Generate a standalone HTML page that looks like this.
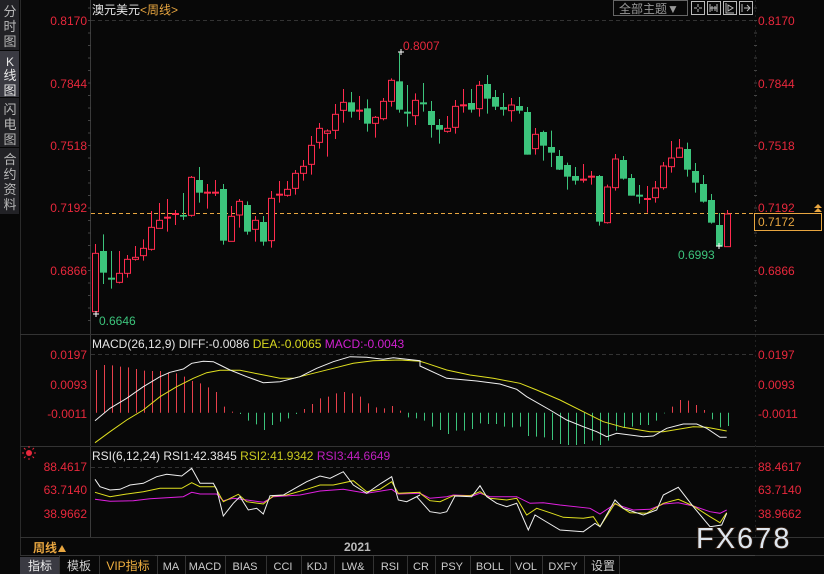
<!DOCTYPE html>
<html><head><meta charset="utf-8"><style>
html,body{margin:0;padding:0;background:#080808;width:824px;height:574px;overflow:hidden;font-family:"Liberation Sans","Noto Sans CJK SC",sans-serif}
svg{position:absolute;left:0;top:0}
</style></head><body>
<svg id="s" width="824" height="574" xmlns="http://www.w3.org/2000/svg" font-family="Liberation Sans, Noto Sans CJK SC, sans-serif">
<rect width="824" height="574" fill="#080808"/>
<!-- sidebar -->
<rect x="0" y="0" width="19" height="50" fill="#222226"/>
<rect x="0" y="51" width="19" height="46" fill="#3a3a42"/>
<rect x="0" y="98" width="19" height="49" fill="#222226"/>
<rect x="0" y="148" width="19" height="66" fill="#222226"/>
<g fill="#b8b8b8" font-size="13" text-anchor="middle">
<text x="10" y="16">分</text><text x="10" y="31">时</text><text x="10" y="46">图</text>
<text x="10" y="66" fill="#e8e8e8" font-size="12">K</text><text x="10" y="80" fill="#e8e8e8">线</text><text x="10" y="95" fill="#e8e8e8">图</text>
<text x="10" y="114">闪</text><text x="10" y="129">电</text><text x="10" y="144">图</text>
<text x="10" y="164">合</text><text x="10" y="179">约</text><text x="10" y="194">资</text><text x="10" y="209">料</text>
</g>
<!-- frame lines -->
<line x1="20.5" y1="0" x2="20.5" y2="556" stroke="#2a2a2a"/>
<line x1="90.5" y1="0" x2="90.5" y2="537" stroke="#3a3a3a"/>
<line x1="20" y1="334.5" x2="824" y2="334.5" stroke="#333"/>
<line x1="20" y1="446.5" x2="824" y2="446.5" stroke="#333"/>
<line x1="20" y1="537.5" x2="824" y2="537.5" stroke="#333"/>
<line x1="20" y1="555.5" x2="824" y2="555.5" stroke="#333"/>
<line x1="755.5" y1="0" x2="755.5" y2="537" stroke="#222" stroke-dasharray="2,3"/>
<!-- gridlines -->
<line x1="91" y1="20.5" x2="755" y2="20.5" stroke="#333" stroke-dasharray="4,3"/>
<line x1="91" y1="354.5" x2="755" y2="354.5" stroke="#333" stroke-dasharray="4,3"/>
<line x1="91" y1="467.5" x2="755" y2="467.5" stroke="#333" stroke-dasharray="4,3"/>
<g id="ticks"></g>
<!-- titles -->
<text x="92" y="14" font-size="12" fill="#e6e6e6">澳元美元<tspan fill="#e8a640">&lt;周线&gt;</tspan></text>
<rect x="613.5" y="0.5" width="74" height="15" fill="none" stroke="#666"/>
<text x="619" y="13" font-size="12" fill="#999">全部主题▼</text>
<g fill="none" stroke="#bbb" stroke-width="1">
<rect x="691.5" y="1.5" width="13" height="13"/><path d="M698 4v3M698 9v3M694 8h3M699 8h3"/>
<rect x="707.5" y="1.5" width="13" height="13"/><path d="M710 4v8M717 4v8M710 8h7M712 6v5M715 6v5"/>
<rect x="723.5" y="1.5" width="13" height="13"/><path d="M726 3v10h8M728 5l5 3-5 3z"/>
<rect x="739.5" y="1.5" width="13" height="13"/><path d="M742 4v8M744 8h6M747 5l3 3-3 3"/>
</g>
<!-- price axis labels -->
<g font-size="12" fill="#e8283c">
<g text-anchor="end"><text x="87" y="25">0.8170</text><text x="87" y="88">0.7844</text><text x="87" y="150">0.7518</text><text x="87" y="212">0.7192</text><text x="87" y="275">0.6866</text>
<text x="87" y="359">0.0197</text><text x="87" y="389">0.0093</text><text x="87" y="418">-0.0011</text>
<text x="87" y="471">88.4617</text><text x="87" y="494">63.7140</text><text x="87" y="518">38.9662</text></g>
<text x="758" y="25">0.8170</text><text x="758" y="88">0.7844</text><text x="758" y="150">0.7518</text><text x="758" y="212">0.7192</text><text x="758" y="275">0.6866</text>
<text x="758" y="359">0.0197</text><text x="758" y="389">0.0093</text><text x="758" y="418">-0.0011</text>
<text x="758" y="471">88.4617</text><text x="758" y="494">63.7140</text><text x="758" y="518">38.9662</text>
</g>
<line x1="91" y1="213.5" x2="822" y2="213.5" stroke="#e8a640" stroke-dasharray="4,3"/>
<rect x="754.5" y="213.5" width="67" height="17" fill="#080808" stroke="#e8a640"/>
<text x="758" y="226" font-size="12" fill="#e8a640">0.7172</text>
<path d="M814 208l4-4 4 4zM814 212l4-4 4 4z" fill="#e8a640"/>
<g id="candles"></g>
<text x="403" y="50" font-size="12" fill="#e8283c">0.8007</text>
<text x="99" y="325" font-size="12" fill="#3cc47c">0.6646</text>
<text x="678" y="259" font-size="12" fill="#3cc47c">0.6993</text>
<!-- MACD -->
<text x="92" y="348" font-size="12" fill="#e6e6e6">MACD(26,12,9) DIFF:-0.0086 <tspan fill="#d8d820">DEA:-0.0065</tspan> <tspan fill="#d020d0">MACD:-0.0043</tspan></text>
<g id="macd"></g>
<!-- RSI -->
<circle cx="29" cy="453" r="3" fill="#e8283c"/>
<g stroke="#e8283c" stroke-width="1"><path d="M29 446v2M29 458v2M22 453h2M34 453h2M24 448l1.5 1.5M34 448l-1.5 1.5M24 458l1.5-1.5M34 458l-1.5-1.5"/></g>
<text x="92" y="460" font-size="12" fill="#e6e6e6">RSI(6,12,24) RSI1:42.3845 <tspan fill="#c8c820">RSI2:41.9342</tspan> <tspan fill="#c020c0">RSI3:44.6649</tspan></text>
<g id="rsi"></g>
<!-- time axis -->
<text x="33" y="552" font-size="12" fill="#e8a640" font-weight="bold">周线</text>
<path d="M58 552l4-7 4 7z" fill="#e8a640"/>
<text x="344" y="551" font-size="12" fill="#bbb" font-weight="bold">2021</text>
<line x1="155" y1="555.5" x2="755" y2="555.5" stroke="#444"/>
<!-- FX678 -->
<text x="696" y="548" font-size="29" fill="#dfe6ee" letter-spacing="2" style="paint-order:stroke" stroke="#2a1a10" stroke-width="2">FX678</text>
<!-- toolbar -->
<rect x="20" y="556" width="804" height="18" fill="#080808"/>
<rect x="20" y="557" width="39" height="17" fill="#3a3a42"/>
<g stroke="#333"><path d="M59.5 556v18M99.5 556v18M157.5 556v18M185.5 556v18M225.5 556v18M266.5 556v18M301.5 556v18M334.5 556v18M373.5 556v18M407.5 556v18M435.5 556v18M470.5 556v18M510.5 556v18M542.5 556v18M584.5 556v18M619.5 556v18"/></g>
<g font-size="12" fill="#ccc" text-anchor="middle">
<text x="40" y="570" fill="#eee">指标</text><text x="79" y="570">模板</text><text x="128" y="570" fill="#f0b040">VIP指标</text>
<text x="171" y="570" font-size="11">MA</text><text x="205" y="570" font-size="11">MACD</text><text x="245" y="570" font-size="11">BIAS</text>
<text x="283" y="570" font-size="11">CCI</text><text x="317" y="570" font-size="11">KDJ</text><text x="353" y="570" font-size="11">LW&amp;</text>
<text x="390" y="570" font-size="11">RSI</text><text x="421" y="570" font-size="11">CR</text><text x="452" y="570" font-size="11">PSY</text>
<text x="490" y="570" font-size="11">BOLL</text><text x="526" y="570" font-size="11">VOL</text><text x="563" y="570" font-size="11">DXFY</text>
<text x="603" y="570">设置</text>
</g>
</svg>
<script>
var NS="http://www.w3.org/2000/svg";
function el(p,t,a){var e=document.createElementNS(NS,t);for(var k in a)e.setAttribute(k,a[k]);p.appendChild(e);return e;}
var tk=document.getElementById('ticks');
for(var y=8;y<330;y+=12.5){el(tk,'line',{x1:88,y1:y,x2:91,y2:y,stroke:'#444'});el(tk,'line',{x1:754,y1:y,x2:757,y2:y,stroke:'#444'});}
var C=[['R',640,815,612,815],['G',633,698,583,732],['G',716,716,633,746],['R',700,727,633,730],['R',658,700,645,713],['R',652,658,618,662],['R',625,647,598,662],['R',562,628,513,632],['R',541,565,489,565],['R',533,533,477,575],['R',522,522,510,555],['G',525,530,459,540],['R',412,526,408,530],['G',420,458,381,488],['R',458,458,432,506],['R',458,458,420,468],['G',447,602,432,614],['R',529,604,498,604],['R',484,525,477,563],['G',495,575,484,584],['R',541,568,528,605],['G',546,605,528,617],['R',475,602,453,623],['R',464,464,423,488],['R',448,466,423,470],['R',400,445,390,464],['R',379,400,360,422],['R',316,373,288,404],['R',265,307,249,326],['R',273,280,268,350],['R',223,271,192,297],['R',187,211,147,248],['G',187,215,156,233],['R',212,212,168,240],['G',205,251,178,275],['R',232,250,228,293],['R',184,236,174,241],['R',121,184,115,200],['G',124,209,38,218],['G',218,218,135,260],['R',181,227,160,255],
['G',190,190,129,215],['G',213,255,183,293],['G',255,269,237,311],['R',265,274,228,278],['R',199,262,180,281],['R',196,196,147,218],['G',189,209,147,218],['R',136,206,123,230],['G',132,176,105,221],['G',171,200,150,210],['G',201,209,159,227],['R',195,212,174,245],['G',198,212,171,221],['G',216,344,201,344],['R',283,326,264,344],['G',276,317,272,362],['G',321,338,272,381],['G',348,389,330,390],['G',375,410,368,449],['G',408,422,381,434],['R',419,419,372,428],['R',410,410,393,434],['G',408,545,405,557],['R',441,548,434,551],['R',357,443,342,452],['G',360,416,348,419],['G',414,467,402,467],['G',467,467,435,491],['R',477,477,438,518],['R',444,473,423,488],['R',378,443,366,449],['R',354,380,303,398],['R',324,352,297,352],['G',327,389,308,410],['G',393,428,369,458],['G',432,485,405,488],['G',480,548,462,551],['G',555,620,519,620],['R',522,620,510,620]];
var g=document.getElementById('candles');
C.forEach(function(c,i){var x=Math.round(95.3+8*i)+0.5;var col=c[0]=='R'?'#ff2b4e':'#3cc47c';
var bt=40+c[1]/3,bb=40+c[2]/3,wt=40+c[3]/3,wb=40+c[4]/3;
el(g,'line',{x1:x,y1:wt,x2:x,y2:wb,stroke:col});
if(c[1]==c[2]){el(g,'rect',{x:x-3.5,y:bt-1,width:7,height:2,fill:col});}
else if(c[0]=='R'){el(g,'rect',{x:x-3,y:bt,width:6,height:bb-bt,fill:'#080808',stroke:col});}
else{el(g,'rect',{x:x-3.5,y:bt,width:7,height:bb-bt,fill:col});}
});
// extreme markers
el(g,'path',{d:'M398 52h6M401 49v6M93 314h6M96 311v6M716 246h6M719 243v6',stroke:'#fff'});
// MACD histogram
var mg=document.getElementById('macd');
var H=[120,105,106,110,112,117,122,123,123,127,130,140,153,160,172,186,230,245,252,272,283,300,285,275,265,252,237,222,205,200,190,186,190,200,220,232,235,228,242,262,265,272,290,300,312,302,302,297,280,282,282,290,292,290,318,320,322,330,342,345,345,342,332,345,332,302,292,290,285,285,272,250,230,210,212,225,240,268,292,288];
H.forEach(function(h,i){var x=Math.round(95.7+8*i)+0.5;var y=330+h/3;var z=412.7;
el(mg,'line',{x1:x,y1:z,x2:x,y2:y,stroke:h<248?'#e8404c':'#3cc47c'});});
function pl(p,a6,a7,col){var pts=[];a6.forEach(function(q){pts.push((q[0]/3).toFixed(1)+','+(330+q[1]/3).toFixed(1))});a7.forEach(function(q){pts.push((410+q[0]/3).toFixed(1)+','+(330+q[1]/3).toFixed(1))});el(p,'polyline',{points:pts.join(' '),fill:'none',stroke:col,'stroke-width':1});}
pl(mg,[[285,338],[330,305],[380,270],[430,240],[480,200],[530,170],[580,145],[620,128],[660,121],[720,121],[780,133],[840,145],[880,145],[940,130],[1000,115],[1060,100],[1120,92],[1200,90],[1260,94]],[[50,100],[110,120],[180,135],[250,145],[330,160],[380,180],[450,210],[520,245],[580,275],[640,292],[720,305],[760,305],[850,290],[890,292],[950,303]],'#e0e020');
pl(mg,[[285,272],[330,235],[380,205],[430,170],[480,140],[510,127],[550,117],[575,100],[610,94],[640,95],[660,105],[690,120],[740,140],[790,158],[840,155],[900,140],[950,115],[1000,95],[1050,80],[1100,82],[1150,88],[1180,83],[1260,92]],[[30,108],[110,145],[200,153],[270,162],[320,178],[350,200],[420,240],[470,270],[520,290],[560,305],[590,320],[620,310],[700,320],[730,318],[770,295],[820,282],[860,282],[890,295],[930,322],[950,322]],'#f0f0f0');
var rg=document.getElementById('rsi');
pl(rg,[[285,508],[330,514],[400,512],[450,506],[550,500],[575,487],[600,492],[650,492],[670,512],[700,505],[740,510],[790,517],[820,500],[900,495],[960,483],[1030,478],[1100,490],[1175,478],[1195,492],[1260,490]],[[60,505],[110,500],[130,495],[190,497],[210,490],[240,500],[320,500],[360,520],[400,518],[450,525],[540,535],[570,552],[615,522],[670,540],[720,538],[760,522],[805,518],[850,528],[900,545],[930,550],[950,540]],'#e020e0');
pl(rg,[[285,487],[330,500],[380,492],[430,485],[480,475],[545,475],[575,458],[600,470],[645,470],[670,515],[715,493],[740,515],[790,522],[820,498],[860,495],[920,478],[960,465],[1000,465],[1060,452],[1100,485],[1140,478],[1175,455],[1195,490],[1260,487]],[[30,490],[60,512],[90,515],[130,497],[180,497],[210,485],[240,505],[290,510],[320,505],[350,555],[380,535],[420,548],[460,562],[520,565],[550,560],[570,590],[615,520],[660,548],[710,550],[760,520],[805,508],[850,528],[900,560],[930,578],[950,548]],'#e0e020');
pl(rg,[[285,448],[300,470],[330,480],[360,478],[390,465],[430,460],[470,440],[500,433],[545,438],[575,415],[600,460],[640,460],[650,478],[670,558],[700,520],[720,500],[745,540],[770,535],[790,552],[810,497],[850,495],[880,478],[920,455],[960,438],[990,445],[1030,425],[1060,465],[1100,490],[1140,462],[1175,440],[1195,510],[1220,515],[1260,495]],[[20,500],[60,545],[90,550],[110,545],[135,498],[185,500],[210,467],[230,500],[260,520],[290,530],[320,520],[355,600],[375,555],[400,570],[450,600],[520,605],[555,580],[570,590],[615,510],[640,535],[700,555],[740,540],[760,495],[805,472],[850,530],[900,590],[935,585],[950,550]],'#f0f0f0');
</script>
</body></html>
